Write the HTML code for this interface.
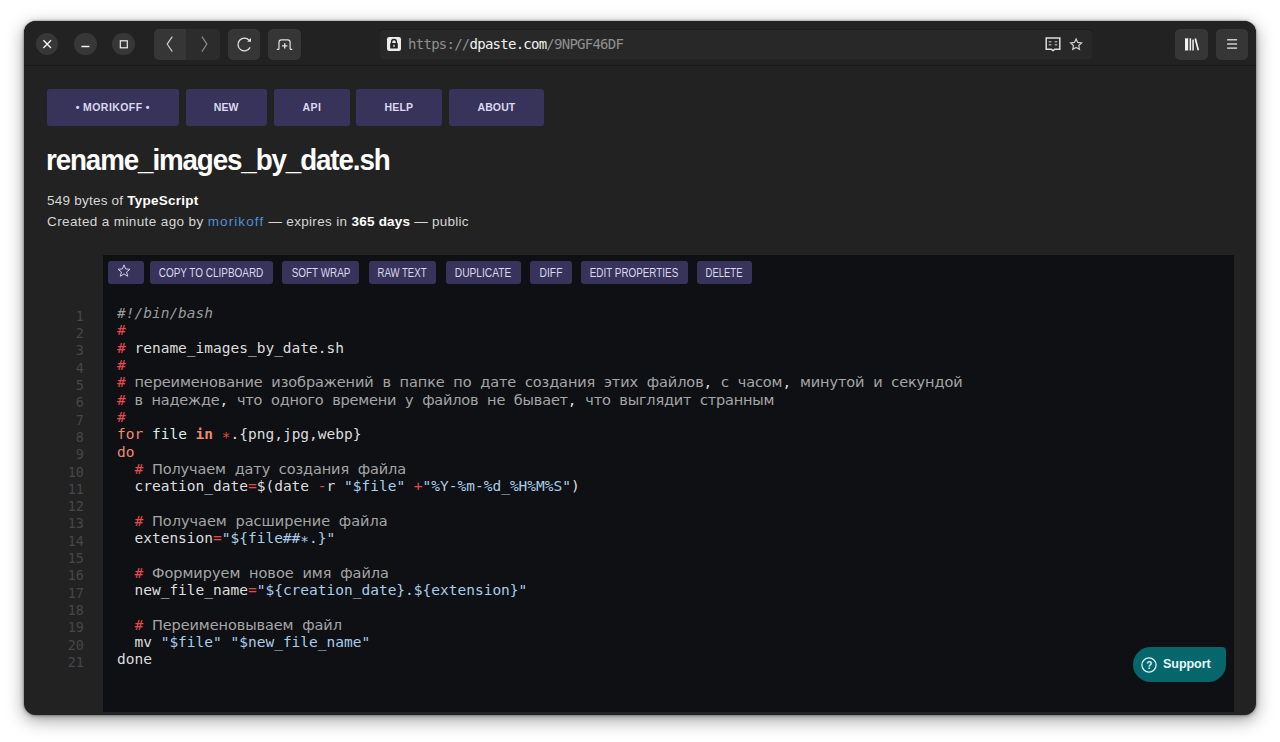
<!DOCTYPE html>
<html lang="en">
<head>
<meta charset="utf-8">
<title>rename_images_by_date.sh - dpaste</title>
<style>
*{box-sizing:border-box;margin:0;padding:0}
html,body{width:1280px;height:742px;background:#fff;overflow:hidden}
body{font-family:"Liberation Sans",sans-serif;position:relative}
.win{position:absolute;left:24px;top:21.2px;width:1231.7px;height:693.4px;background:#222222;border-radius:12px;overflow:hidden;
 box-shadow:0 0 1.5px rgba(0,0,0,.6),0 5px 18px rgba(0,0,0,.38),0 1px 5px rgba(0,0,0,.3)}
.abs{position:absolute}
.bar{position:absolute;left:0;top:0;width:1232px;height:45.3px;background:#222222;border-bottom:1px solid #1a1a1a}
.cbtn{position:absolute;top:12px;width:22.2px;height:22.2px;border-radius:50%;background:#373737}
.tbtn{position:absolute;top:7.8px;height:30.7px;width:32px;background:#363636;border-radius:5px}
.url{position:absolute;left:354.8px;top:7.6px;width:714px;height:30.8px;background:#282828;border-radius:5px;box-shadow:inset 0 1px 0 #1d1d1d,inset 0 0 0 1px rgba(0,0,0,.1)}
.url .t{position:absolute;left:29.3px;top:-.1px;line-height:30px;font-family:"DejaVu Sans Mono","Liberation Mono",monospace;font-size:14px;letter-spacing:-.748px;color:#8f8f8f;white-space:pre}
.url .t b{font-weight:normal;color:#f1f1f1}
svg{position:absolute;overflow:visible}
.nav{position:absolute;top:68.1px;height:36.6px;background:#37335a;border-radius:3px;color:#dcd8ee;font-weight:bold;font-size:10.5px;letter-spacing:0;text-align:center;line-height:37px}
h1{position:absolute;left:22px;top:121.3px;font-size:30px;line-height:36px;color:#fff;font-weight:bold;letter-spacing:-1.2px;white-space:nowrap;transform:scaleX(.925);transform-origin:0 0}
.meta{position:absolute;left:23px;font-size:13.5px;line-height:20px;color:#d6d6d6;white-space:nowrap;letter-spacing:.23px}
.meta b{color:#fff}
.meta a{color:#4d90d6;text-decoration:none}
.code{position:absolute;left:78.5px;top:233.4px;width:1131.4px;height:457.9px;background:#0e1013}
.ab{position:absolute;margin-left:.2px;top:6.7px;height:23px;background:#37335a;border-radius:3px;color:#dcd8ee;font-size:12.3px;line-height:23px;text-align:center;white-space:nowrap;overflow:hidden}
.ab span{position:absolute;left:50%;top:.8px;transform:translateX(-50%) scaleX(var(--s,.8));transform-origin:50% 50%}
.ln{position:absolute;left:30.4px;top:286.5px;width:29.5px;text-align:right;font-family:"DejaVu Sans Mono","Liberation Mono",monospace;font-size:13.4px;line-height:17.31px;color:#474747;white-space:pre}
pre{position:absolute;left:14.5px;top:50.6px;font-family:"DejaVu Sans Mono","Liberation Mono",monospace;font-size:14.51px;line-height:17.31px;color:#dedede;white-space:pre}
.c{color:#9a9a9a;font-style:italic}
.e{color:#e5484d}
.g{color:#a6a6a6;font-family:"DejaVu Sans","Liberation Sans",sans-serif;font-size:14.5px}
.ga{letter-spacing:-0.094px}.gb{letter-spacing:-0.2px}.gd{letter-spacing:-0.12px}.gf{letter-spacing:-0.013px}.gh{letter-spacing:-0.02px}.gj{letter-spacing:-0.09px}
.k{color:#ee8a6f}
.kb{font-weight:bold}
.st{position:relative;top:3px}
.v{color:#d5efe7}
.s{color:#a8cdea}
.sup{position:absolute;left:1109.1px;top:625.9px;width:93px;height:35.4px;background:#05666c;border-radius:18px 4px 18px 18px;color:#e6fbfb;font-weight:bold;font-size:12.6px;line-height:35.4px}
.sup span{position:absolute;left:29.9px;top:.3px;letter-spacing:-.1px}
.sup i{position:absolute;left:8.3px;top:.6px;width:16px;text-align:center;font-style:normal;font-size:10px;color:#d9f3f3}
</style>
</head>
<body>
<div class="win">
 <div class="bar">
  <div class="cbtn" style="left:12.2px"></div>
  <div class="cbtn" style="left:50.4px"></div>
  <div class="cbtn" style="left:88.4px"></div>
  <svg style="left:0;top:0" width="140" height="45" viewBox="0 0 140 45" fill="none" stroke="#f2f2f2" stroke-width="1.35">
   <path d="M19.4 19.3l7.6 7.6M27 19.3l-7.6 7.6"/>
   <path d="M57.4 25.5h8" stroke-width="1.5"/>
   <rect x="96.3" y="19.8" width="7" height="7" stroke-width="1.15"/>
  </svg>
  <div class="tbtn" style="left:129.8px;width:32.5px;border-radius:5px 0 0 5px"></div>
  <div class="tbtn" style="left:162.3px;width:33.7px;background:#2c2c2c;border-radius:0 5px 5px 0"></div>
  <div class="tbtn" style="left:204.1px;width:32px"></div>
  <div class="tbtn" style="left:244.1px;width:32.5px"></div>
  <svg style="left:120px;top:0" width="170" height="45" viewBox="120 0 170 45" fill="none" stroke="#cccccc" stroke-width="1.15" stroke-linejoin="miter">
   <path d="M148.3 15.6l-5.1 7.5l5.1 7.5"/>
   <path d="M177.9 15.6l5 7.5l-5 7.5" stroke="#8c8c8c"/>
   <path d="M225.2 19.2a6.4 6.4 0 1 0 .9 7.2" stroke="#e2e2e2" stroke-width="1.3"/>
   <path d="M227 16.9v3.9h-3.9z" fill="#e2e2e2" stroke="none"/>
   <path d="M252.8 28.4h1.3q.9 0 .9-.9v-6.4q0-2.3 2.3-2.3h6.5q2.3 0 2.3 2.3v6.4q0 .9 .9 .9h1.3" stroke="#e2e2e2" stroke-width="1.2"/>
   <path d="M258 24.9h5.4M260.7 22.2v5.4" stroke="#e2e2e2" stroke-width="1.4"/>
  </svg>
  <div class="url">
   <svg style="left:8.2px;top:8.4px" width="14" height="14" viewBox="0 0 14 14"><rect x="0" y="0" width="14" height="14" rx="2.2" fill="#ececec"/><path d="M4.6 6.2V4.9a2.4 2.4 0 0 1 4.8 0v1.3" fill="none" stroke="#222" stroke-width="1.4"/><rect x="3.2" y="6.1" width="7.6" height="5.4" rx=".6" fill="#222"/><rect x="6.4" y="7.6" width="1.2" height="2.4" fill="#ececec"/></svg>
   <div class="t">https://<b>dpaste.com</b>/9NPGF46DF</div>
   <svg style="left:666px;top:8.4px" width="40" height="14" viewBox="0 0 40 14" fill="none" stroke="#dcdcdc" stroke-width="1.5">
    <path d="M1.2 .9h13.6v11.4h-5.2l-1.6 1.2l-1.6-1.2h-5.2z" stroke-linejoin="miter"/>
    <path d="M3.7 4.7h2.7M3.7 7.8h2.7M9.6 4.7h2.7M9.6 7.8h2.7" stroke="#9a9a9a" stroke-width="1.6"/>
    <path d="M31.1 1.9l1.65 3.5l3.8.5l-2.8 2.6l.7 3.75l-3.35-1.85l-3.35 1.85l.7-3.75l-2.8-2.6l3.8-.5z" stroke="#cdcdcd" stroke-linejoin="miter" stroke-width="1.25"/>
   </svg>
  </div>
  <div class="tbtn" style="left:1151.2px;width:32.7px"></div>
  <div class="tbtn" style="left:1192px;width:32.3px"></div>
  <svg style="left:1150px;top:0" width="80" height="45" viewBox="1150 0 80 45" fill="#f2f2f2" stroke="none">
   <rect x="1161" y="17.3" width="3.2" height="12.2"/>
   <rect x="1165.6" y="17.3" width="1.5" height="12.2"/>
   <rect x="1168.3" y="18.6" width="1.5" height="10.9"/>
   <path d="M1170.5 17.8l1.6-.5l3 11.8l-1.6.5z"/>
   <rect x="1203.1" y="18.2" width="10" height="1.2"/>
   <rect x="1203.1" y="22.4" width="10" height="1.2"/>
   <rect x="1203.1" y="26.5" width="10" height="1.2"/>
  </svg>
 </div>

 <div class="nav" style="left:23px;width:131.6px;letter-spacing:.42px">• MORIKOFF •</div>
 <div class="nav" style="left:161.5px;width:81.2px;letter-spacing:.05px">NEW</div>
 <div class="nav" style="left:250px;width:75.8px;letter-spacing:.45px">API</div>
 <div class="nav" style="left:331.6px;width:86.5px;letter-spacing:.15px">HELP</div>
 <div class="nav" style="left:424.9px;width:95.1px;letter-spacing:.12px">ABOUT</div>

 <h1>rename_images_by_date.sh</h1>
 <div class="meta" style="top:170.2px">549 bytes of <b>TypeScript</b></div>
 <div class="meta" style="top:190.8px"><span style="letter-spacing:.38px">Created a minute ago by </span><a style="letter-spacing:1.1px">morikoff</a><span style="letter-spacing:.33px"> — expires in </span><b>365 days</b> — public</div>

 <div class="ln">1
2
3
4
5
6
7
8
9
10
11
12
13
14
15
16
17
18
19
20
21</div>

 <div class="code">
  <div class="ab" style="left:5px;width:36.3px"><svg style="left:9.6px;top:2.6px" width="14" height="14" viewBox="0 0 14 14" fill="none" stroke="#cfcbe6" stroke-width="1"><path d="M7 .9l1.6 4.1l4.4.25l-3.4 2.8l1.15 4.25l-3.75-2.4l-3.75 2.4l1.15-4.25l-3.4-2.8l4.4-.25z" stroke-linejoin="miter"/></svg></div>
  <div class="ab" style="left:47px;width:123px"><span style="--s:0.810">COPY TO CLIPBOARD</span></div>
  <div class="ab" style="left:179.5px;width:77px"><span style="--s:0.806">SOFT WRAP</span></div>
  <div class="ab" style="left:266px;width:67px"><span style="--s:0.781">RAW TEXT</span></div>
  <div class="ab" style="left:343px;width:75px"><span style="--s:0.828">DUPLICATE</span></div>
  <div class="ab" style="left:427.5px;width:41.5px"><span style="--s:0.837">DIFF</span></div>
  <div class="ab" style="left:478px;width:107px"><span style="--s:0.802">EDIT PROPERTIES</span></div>
  <div class="ab" style="left:594px;width:55.3px"><span style="--s:0.772">DELETE</span></div>
<pre><span class="c">#!/bin/bash</span>
<span class="e">#</span>
<span class="e">#</span> rename_images_by_date.sh
<span class="e">#</span>
<span class="e">#</span> <span class="g ga">переименование</span> <span class="g ga">изображений</span> <span class="g ga">в</span> <span class="g ga">папке</span> <span class="g ga">по</span> <span class="g ga">дате</span> <span class="g ga">создания</span> <span class="g ga">этих</span> <span class="g ga">файлов</span>, <span class="g ga">с</span> <span class="g ga">часом</span>, <span class="g ga">минутой</span> <span class="g ga">и</span> <span class="g ga">секундой</span>
<span class="e">#</span> <span class="g gb">в</span> <span class="g gb">надежде</span>, <span class="g gb">что</span> <span class="g gb">одного</span> <span class="g gb">времени</span> <span class="g gb">у</span> <span class="g gb">файлов</span> <span class="g gb">не</span> <span class="g gb">бывает</span>, <span class="g gb">что</span> <span class="g gb">выглядит</span> <span class="g gb">странным</span>
<span class="e">#</span>
<span class="k">for</span> <span class="v">file</span> <span class="k kb">in</span> <span class="e st">*</span>.{png,jpg,webp}
<span class="k">do</span>
  <span class="e">#</span> <span class="g gd">Получаем</span> <span class="g gd">дату</span> <span class="g gd">создания</span> <span class="g gd">файла</span>
  creation_date<span class="e">=</span>$(date <span class="e">-</span>r <span class="s">"$file"</span> <span class="e">+</span><span class="s">"%Y-%m-%d_%H%M%S"</span>)

  <span class="e">#</span> <span class="g gf">Получаем</span> <span class="g gf">расширение</span> <span class="g gf">файла</span>
  extension<span class="e">=</span><span class="s">"${file##<span class="st">*</span>.}"</span>

  <span class="e">#</span> <span class="g gh">Формируем</span> <span class="g gh">новое</span> <span class="g gh">имя</span> <span class="g gh">файла</span>
  new_file_name<span class="e">=</span><span class="s">"${creation_date}.${extension}"</span>

  <span class="e">#</span> <span class="g gj">Переименовываем</span> <span class="g gj">файл</span>
  mv <span class="s">"$file"</span> <span class="s">"$new_file_name"</span>
done</pre>
 </div>
 <div class="sup"><svg style="left:8.3px;top:10.1px" width="16" height="16" viewBox="0 0 16 16" fill="none" stroke="#d9f3f3" stroke-width="1.3"><circle cx="8" cy="8" r="7.1"/></svg><i>?</i><span>Support</span></div>
</div>
</body>
</html>
